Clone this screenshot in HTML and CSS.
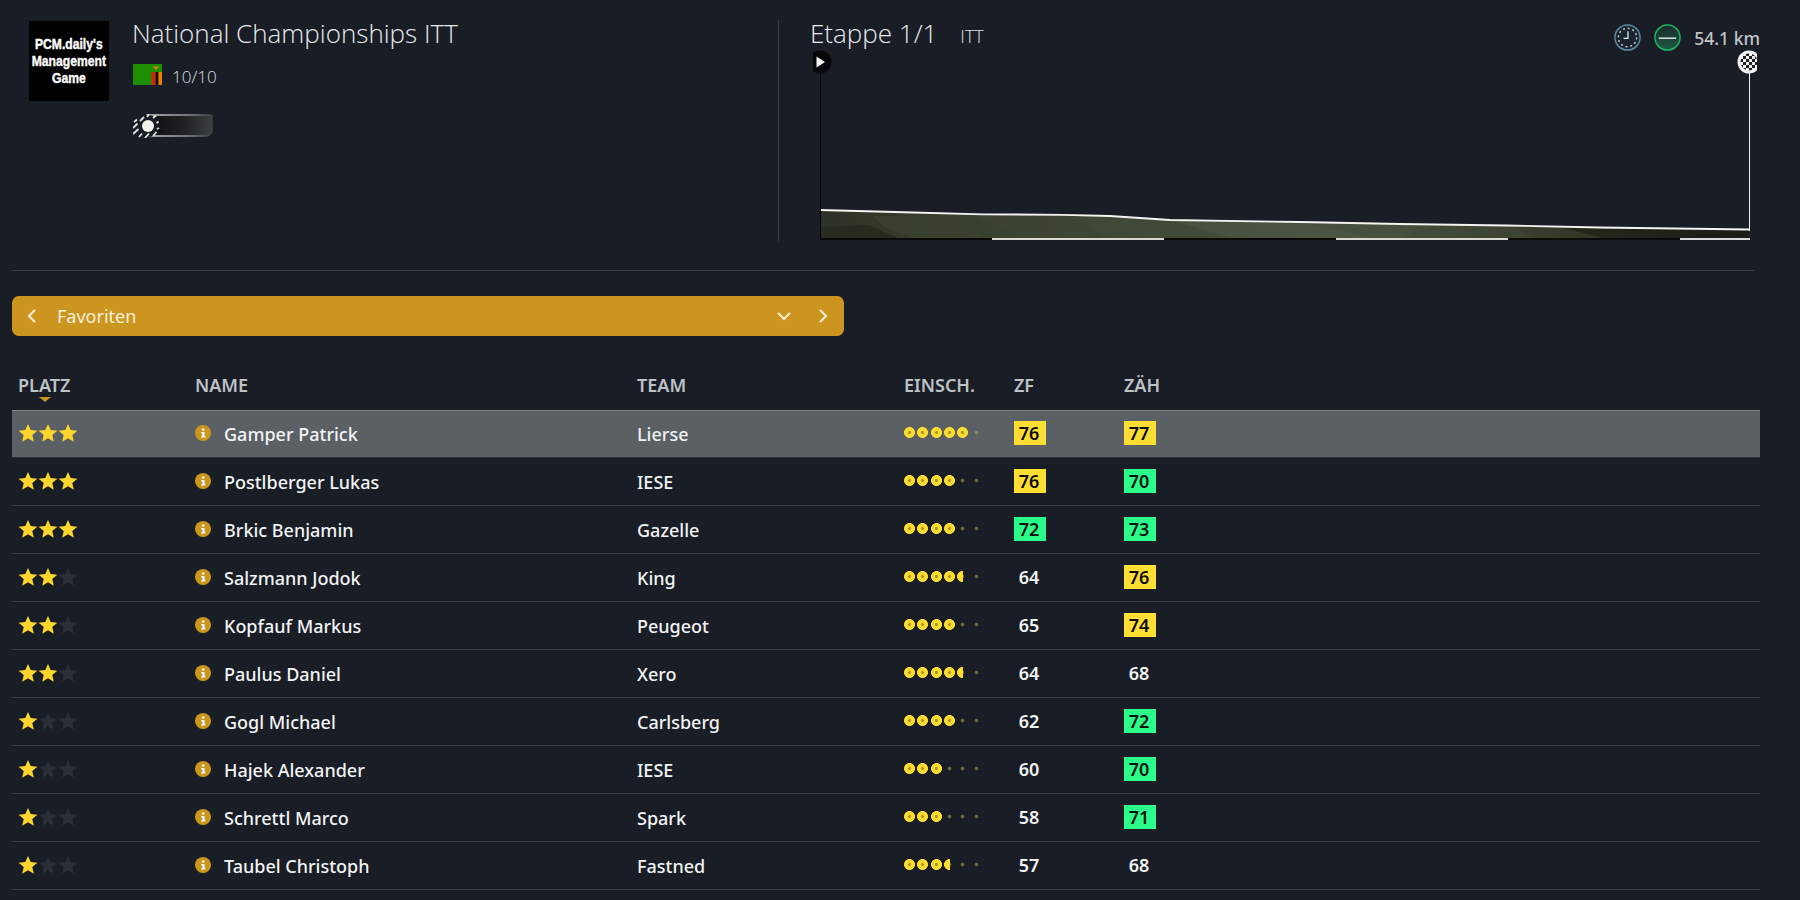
FILE: index.html
```html
<!DOCTYPE html>
<html lang="de">
<head>
<meta charset="utf-8">
<title>National Championships ITT</title>
<link rel="stylesheet" href="styles.css">
</head>
<body>
<svg class="defs" aria-hidden="true">
  <symbol id="star" viewBox="0 0 20 20"><polygon points="10,1 12.7,7.1 19.4,7.7 14.3,12.1 15.8,18.8 10,15.2 4.2,18.8 5.7,12.1 .6,7.7 7.3,7.1"/></symbol>
  <symbol id="info" viewBox="0 0 16 16"><circle cx="8" cy="8" r="8" fill="#cb951f"/><rect x="6.9" y="3.6" width="2.6" height="2" fill="#fff"/><path d="M6.2 7h3.3v4.2h1v1.3H6.2v-1.3h1V8.2h-1z" fill="#fff"/></symbol>
</svg>
<header class="top">
  <section class="event">
    <div class="logo"><span>PCM.daily's</span><span>Management</span><span>Game</span></div>
    <div class="event-info">
      <h1 class="event-title">National Championships ITT</h1>
      <div class="event-meta">
        <svg class="flag" viewBox="0 0 29 21"><rect width="29" height="21" fill="#1f8f02"/><rect x="18.6" y="8" width="4" height="13" fill="#de2010"/><rect x="22.6" y="8" width="3" height="13" fill="#111"/><rect x="25.6" y="8" width="3.4" height="13" fill="#ef7d00"/><path d="M19.5 2.5h7l-2 1.5-1.500 2-1.500-2z" fill="#ef7d00"/></svg>
        <span>10/10</span>
      </div>
      <svg class="weather" viewBox="0 0 80 24">
        <defs>
          <linearGradient id="pill" x1="0" x2="1"><stop offset="0" stop-color="#0c0e10"/><stop offset=".55" stop-color="#1e2123"/><stop offset="1" stop-color="#3a3f41"/></linearGradient>
          <linearGradient id="pillEdge" x1="0" x2="1"><stop offset="0" stop-color="#d6d8d8"/><stop offset=".65" stop-color="#8a8e90"/><stop offset="1" stop-color="#3a3f41"/></linearGradient>
        </defs>
        <path d="M14 1H78a1 1 0 0 1 1 1V16a6 6 0 0 1-6 6H14z" fill="url(#pill)" stroke="url(#pillEdge)" stroke-width="1.500"/>
        <circle cx="15" cy="12" r="11" fill="#191d25"/>
        <circle cx="15" cy="12" r="6" fill="#f4f2ea"/>
        <path d="M7 7l4-4M14 3l2-2.500M20 4l3-2.500M23.500 9l2-1.500M24 15l2-1M20 22l3.500-4M12 24l4-4.500M6 23l3-3.500M0 20l5.500-5M0 14l4.500-4.500M1 8l3-2.500" stroke="#e4e6e5" stroke-width="1.800" fill="none"/>
      </svg>
    </div>
  </section>
  <section class="stage">
    <div class="stage-head">
      <div class="stage-title"><h2>Etappe 1/1</h2><span class="stage-type">ITT</span></div>
      <div class="stage-stats">
        <svg class="stat-icon" viewBox="0 0 28 28"><circle cx="14" cy="14" r="13" fill="#1b2530" stroke="#5b8aa6" stroke-width="1.500"/><circle cx="14" cy="14" r="9.500" fill="none" stroke="#c9cdd0" stroke-width="1.500" stroke-dasharray="2 2.970"/><path d="M14.500 7.500V15H10" fill="none" stroke="#e6e8e9" stroke-width="1.300"/></svg>
        <svg class="stat-icon" viewBox="0 0 28 28"><defs><linearGradient id="flat" x1="0" x2="0" y1="0" y2="1"><stop offset="0" stop-color="#1a2a2a"/><stop offset="1" stop-color="#1d5a42"/></linearGradient></defs><circle cx="14" cy="14" r="13" fill="url(#flat)" stroke="#1fb565" stroke-width="1.500"/><rect x="5" y="14" width="18" height="1.400" fill="#eef2ef"/></svg>
        <span class="distance">54.1 km</span>
      </div>
    </div>
    <svg class="profile" viewBox="0 0 944 190">
      <defs>
        <linearGradient id="land" x1="0" x2="1"><stop offset="0" stop-color="#2c3226"/><stop offset=".12" stop-color="#363d2d"/><stop offset=".3" stop-color="#3f4836"/><stop offset=".62" stop-color="#475140"/><stop offset=".8" stop-color="#343a2a"/><stop offset="1" stop-color="#1b1e15"/></linearGradient>
        <pattern id="check" width="6" height="6" patternUnits="userSpaceOnUse"><rect width="6" height="6" fill="#eee"/><rect width="3" height="3" fill="#222"/><rect x="3" y="3" width="3" height="3" fill="#222"/></pattern>
      </defs>
      <path d="M7 160 100 162.500 170 164.300 250 164.800 297 166 357 170 487 172 587 174 693 175.500 787 177.500 936 179.500V188H7z" fill="url(#land)"/>
      <path d="M7 188V177L55 175 85 188z" fill="#262b20"/>
      <path d="M60 166 72 177 100 188H170L150 165z" fill="#3c4333" opacity=".7"/>
      <path d="M160 165 215 188H290L260 165z" fill="#3d4534" opacity=".7"/>
      <path d="M360 171 420 188H560L490 173z" fill="#525c47" opacity=".45"/>
      <path d="M620 175 590 188H720L700 176z" fill="#3f4736" opacity=".55"/>
      <path d="M750 178 790 188H936V180z" fill="#1a1d14" opacity=".6"/>
      <path d="M7 160 100 162.500 170 164.300 250 164.800 297 166 357 170 487 172 587 174 693 175.500 787 177.500 936 179.500" fill="none" stroke="#f4f5f2" stroke-width="1.800"/>
      <rect x="7" y="188" width="172" height="2" fill="#0a0b08"/>
      <rect x="179" y="188" width="172" height="2" fill="#d8d8d6"/>
      <rect x="351" y="188" width="172" height="2" fill="#0a0b08"/>
      <rect x="523" y="188" width="172" height="2" fill="#d8d8d6"/>
      <rect x="695" y="188" width="172" height="2" fill="#0a0b08"/>
      <rect x="867" y="188" width="70" height="2" fill="#d8d8d6"/>
      <rect x="7" y="20" width="1" height="170" fill="#06070a"/>
      <rect x="936" y="20" width="1" height="161" fill="#f2f2f2"/>
      <circle cx="7" cy="12" r="11.500" fill="#06070a"/>
      <path d="M3.500 6.500 12 12 3.500 17.500z" fill="#f4f4f4"/>
      <circle cx="936" cy="12" r="11.500" fill="#f2f2f2"/>
      <circle cx="936" cy="12" r="8.500" fill="url(#check)"/>
    </svg>
  </section>
</header>

<nav class="picker">
  <svg class="chev" viewBox="0 0 12 16"><path d="M9 2 3 8l6 6"/></svg>
  <span class="picker-label">Favoriten</span>
  <svg class="chev chev-down" viewBox="0 0 16 12"><path d="M2 3l6 6 6-6"/></svg>
  <svg class="chev" viewBox="0 0 12 16"><path d="M3 2l6 6-6 6"/></svg>
</nav>

<main class="table">
  <div class="row head">
    <div class="sort-cell"><span>Platz</span><i class="caret"></i></div>
    <div>Name</div><div>Team</div><div>Einsch.</div><div>ZF</div><div>Zäh</div>
  </div>

  <div class="row item selected">
    <div class="stars"><svg class="on"><use href="#star"/></svg><svg class="on"><use href="#star"/></svg><svg class="on"><use href="#star"/></svg></div>
    <div class="name"><svg class="info"><use href="#info"/></svg><span>Gamper Patrick</span></div>
    <div class="team">Lierse</div>
    <div class="pips"><i class="full"></i><i class="full"></i><i class="full"></i><i class="full"></i><i class="full"></i><i></i></div>
    <div class="val"><b class="yellow">76</b></div><div class="val"><b class="yellow">77</b></div>
  </div>
  <div class="row item">
    <div class="stars"><svg class="on"><use href="#star"/></svg><svg class="on"><use href="#star"/></svg><svg class="on"><use href="#star"/></svg></div>
    <div class="name"><svg class="info"><use href="#info"/></svg><span>Postlberger Lukas</span></div>
    <div class="team">IESE</div>
    <div class="pips"><i class="full"></i><i class="full"></i><i class="full"></i><i class="full"></i><i></i><i></i></div>
    <div class="val"><b class="yellow">76</b></div><div class="val"><b class="green">70</b></div>
  </div>
  <div class="row item">
    <div class="stars"><svg class="on"><use href="#star"/></svg><svg class="on"><use href="#star"/></svg><svg class="on"><use href="#star"/></svg></div>
    <div class="name"><svg class="info"><use href="#info"/></svg><span>Brkic Benjamin</span></div>
    <div class="team">Gazelle</div>
    <div class="pips"><i class="full"></i><i class="full"></i><i class="full"></i><i class="full"></i><i></i><i></i></div>
    <div class="val"><b class="green">72</b></div><div class="val"><b class="green">73</b></div>
  </div>
  <div class="row item">
    <div class="stars"><svg class="on"><use href="#star"/></svg><svg class="on"><use href="#star"/></svg><svg><use href="#star"/></svg></div>
    <div class="name"><svg class="info"><use href="#info"/></svg><span>Salzmann Jodok</span></div>
    <div class="team">King</div>
    <div class="pips"><i class="full"></i><i class="full"></i><i class="full"></i><i class="full"></i><i class="part"></i><i></i></div>
    <div class="val"><b>64</b></div><div class="val"><b class="yellow">76</b></div>
  </div>
  <div class="row item">
    <div class="stars"><svg class="on"><use href="#star"/></svg><svg class="on"><use href="#star"/></svg><svg><use href="#star"/></svg></div>
    <div class="name"><svg class="info"><use href="#info"/></svg><span>Kopfauf Markus</span></div>
    <div class="team">Peugeot</div>
    <div class="pips"><i class="full"></i><i class="full"></i><i class="full"></i><i class="full"></i><i></i><i></i></div>
    <div class="val"><b>65</b></div><div class="val"><b class="yellow">74</b></div>
  </div>
  <div class="row item">
    <div class="stars"><svg class="on"><use href="#star"/></svg><svg class="on"><use href="#star"/></svg><svg><use href="#star"/></svg></div>
    <div class="name"><svg class="info"><use href="#info"/></svg><span>Paulus Daniel</span></div>
    <div class="team">Xero</div>
    <div class="pips"><i class="full"></i><i class="full"></i><i class="full"></i><i class="full"></i><i class="part"></i><i></i></div>
    <div class="val"><b>64</b></div><div class="val"><b>68</b></div>
  </div>
  <div class="row item">
    <div class="stars"><svg class="on"><use href="#star"/></svg><svg><use href="#star"/></svg><svg><use href="#star"/></svg></div>
    <div class="name"><svg class="info"><use href="#info"/></svg><span>Gogl Michael</span></div>
    <div class="team">Carlsberg</div>
    <div class="pips"><i class="full"></i><i class="full"></i><i class="full"></i><i class="full"></i><i></i><i></i></div>
    <div class="val"><b>62</b></div><div class="val"><b class="green">72</b></div>
  </div>
  <div class="row item">
    <div class="stars"><svg class="on"><use href="#star"/></svg><svg><use href="#star"/></svg><svg><use href="#star"/></svg></div>
    <div class="name"><svg class="info"><use href="#info"/></svg><span>Hajek Alexander</span></div>
    <div class="team">IESE</div>
    <div class="pips"><i class="full"></i><i class="full"></i><i class="full"></i><i></i><i></i><i></i></div>
    <div class="val"><b>60</b></div><div class="val"><b class="green">70</b></div>
  </div>
  <div class="row item">
    <div class="stars"><svg class="on"><use href="#star"/></svg><svg><use href="#star"/></svg><svg><use href="#star"/></svg></div>
    <div class="name"><svg class="info"><use href="#info"/></svg><span>Schrettl Marco</span></div>
    <div class="team">Spark</div>
    <div class="pips"><i class="full"></i><i class="full"></i><i class="full"></i><i></i><i></i><i></i></div>
    <div class="val"><b>58</b></div><div class="val"><b class="green">71</b></div>
  </div>
  <div class="row item">
    <div class="stars"><svg class="on"><use href="#star"/></svg><svg><use href="#star"/></svg><svg><use href="#star"/></svg></div>
    <div class="name"><svg class="info"><use href="#info"/></svg><span>Taubel Christoph</span></div>
    <div class="team">Fastned</div>
    <div class="pips"><i class="full"></i><i class="full"></i><i class="full"></i><i class="part"></i><i></i><i></i></div>
    <div class="val"><b>57</b></div><div class="val"><b>68</b></div>
  </div>
</main>
</body>
</html>
```
FILE: styles.css
```css
* { box-sizing: border-box; }
html, body { height: 100%; }
body {
  margin: 0;
  padding: 0 40px 0 12px;
  background: #191d25;
  color: #f2f3f4;
  font-family: "Noto Sans", "Open Sans", sans-serif;
  overflow: hidden;
}
.defs { display: none; }

/* top header */
.top {
  display: flex;
  height: 271px;
  width: 1742px;
  padding-top: 20px;
  border-bottom: 1px solid #3a3e46;
}
.event {
  display: flex;
  flex: none;
  width: 767px;
  height: 221px;
  padding-left: 17px;
  border-right: 1px solid #3a3e46;
}
.logo {
  display: flex;
  flex-direction: column;
  align-items: center;
  justify-content: center;
  flex: none;
  width: 80px;
  height: 80px;
  margin-top: 1px;
  padding-bottom: 1px;
  background: #000;
  color: #fff;
  font-family: "Liberation Sans", sans-serif;
  font-weight: 700;
  font-size: 15px;
  line-height: 17px;
  white-space: nowrap;
  -webkit-text-stroke: .4px #fff;
}
.logo span { display: block; transform: scaleX(.81); }
.event-info { margin-left: 23px; }
.event-title {
  margin: -1px 0 0;
  font-family: "Open Sans", sans-serif;
  font-weight: 300;
  font-size: 26px;
  line-height: 28px;
  color: #e8eaec;
}
.event-meta {
  display: flex;
  align-items: flex-start;
  gap: 10px;
  margin-top: 17px;
  margin-left: 1px;
  font-family: "Open Sans", sans-serif;
  font-weight: 300;
  font-size: 17px;
  line-height: 21px;
  color: #dcdfe1;
}
.event-meta span { padding-top: 2px; }
.flag { width: 29px; height: 21px; flex: none; }
.weather { display: block; width: 80px; height: 24px; margin-top: 27px; margin-left: 1px; }

/* stage */
.stage { flex: none; width: 974px; height: 221px; }
.stage-head {
  display: flex;
  justify-content: space-between;
  align-items: flex-start;
  height: 30px;
  padding-left: 31px;
  margin-right: -7px;
}
.stage-title { display: flex; align-items: baseline; gap: 23px; margin-top: -2px; }
.stage-title h2 {
  margin: 0;
  font-family: "Open Sans", sans-serif;
  font-weight: 300;
  font-size: 26px;
  line-height: 30px;
  color: #e8eaec;
}
.stage-type {
  font-family: "Open Sans", sans-serif;
  font-weight: 300;
  font-size: 18px;
  color: #e0e2e4;
}
.stage-stats { display: flex; align-items: center; gap: 13px; margin-top: 4px; }
.stat-icon { width: 27px; height: 27px; }
.distance { font-size: 17.500px; font-weight: 500; color: #c0c4c7; }
.profile { display: block; width: 944px; height: 190px; margin-left: 34px; }

/* picker */
.picker {
  display: flex;
  align-items: center;
  width: 832px;
  height: 40px;
  margin-top: 25px;
  padding: 0 15px 0 14px;
  background: #cb951f;
  border-radius: 7px;
}
.picker-label {
  flex: 1;
  margin-left: 19px;
  font-size: 18px;
  color: #f8efd9;
}
.chev { width: 12px; height: 16px; fill: none; stroke: #f6ead0; stroke-width: 2.200; flex: none; }
.chev-down { width: 16px; height: 12px; margin-right: 25px; }

/* table */
.table { width: 1748px; }
.row {
  display: grid;
  grid-template-columns: 177px 442px 267px 110px 110px 1fr;
  padding-left: 6px;
  align-items: center;
}
.head {
  height: 74px;
  padding-top: 37px;
  align-items: start;
  font-size: 18px;
  line-height: 24px;
  font-weight: 600;
  text-transform: uppercase;
  color: #bec2c5;
}
.sort-cell { display: flex; flex-direction: column; }
.caret {
  width: 0;
  height: 0;
  margin: 0 0 0 21px;
  border: 6px solid transparent;
  border-top: 5px solid #cb951f;
  border-bottom: 0;
}
.item {
  height: 48px;
  border-bottom: 1px solid #3a3e46;
  font-size: 18px;
  font-weight: 500;
}
.selected { background: #5b6064; box-shadow: inset 0 1px 0 #7b8086; border-bottom-color: #2a2e35; }

.stars { display: flex; margin-top: -2px; }
.stars svg { width: 20px; height: 20px; fill: #2a2f38; }
.stars svg.on { fill: #fbd62d; }

.name { display: flex; align-items: center; gap: 13px; }
.name span { padding-top: 1px; }
.info { width: 16px; height: 16px; margin-top: -2px; flex: none; }
.team { padding-top: 1px; }

.pips { display: flex; margin-top: -2px; }
.pips i {
  display: block;
  width: 13.330px;
  height: 11px;
  background: radial-gradient(circle at 5.500px 5.500px, #6e6a35 1.500px, transparent 2.200px);
}
.selected .pips i:not(.full) {
  background: radial-gradient(circle at 5.500px 5.500px, #88865c 1.500px, transparent 2.200px);
}
.pips i.full {
  background: radial-gradient(circle at 5.500px 5.500px, #b2982c 1.100px, #fbdc2f 2.200px, #fbdc2f 5.100px, transparent 5.800px);
}
.pips i.part {
  background:
    radial-gradient(circle at 5.500px 5.500px, #fbdc2f 5.100px, transparent 5.800px) 0 0 / 6px 100% no-repeat,
    radial-gradient(circle at 5.500px 5.500px, #6e6a35 1.500px, transparent 2.200px);
}
.val { margin-top: -1px; }
.val b {
  display: block;
  width: 32px;
  height: 24px;
  padding-right: 2px;
  font-weight: 600;
  line-height: 24px;
  text-align: center;
}
.val b.yellow { background: #fede33; color: #0b0b08; }
.val b.green { background: #2bfd8b; color: #04140c; }
```
